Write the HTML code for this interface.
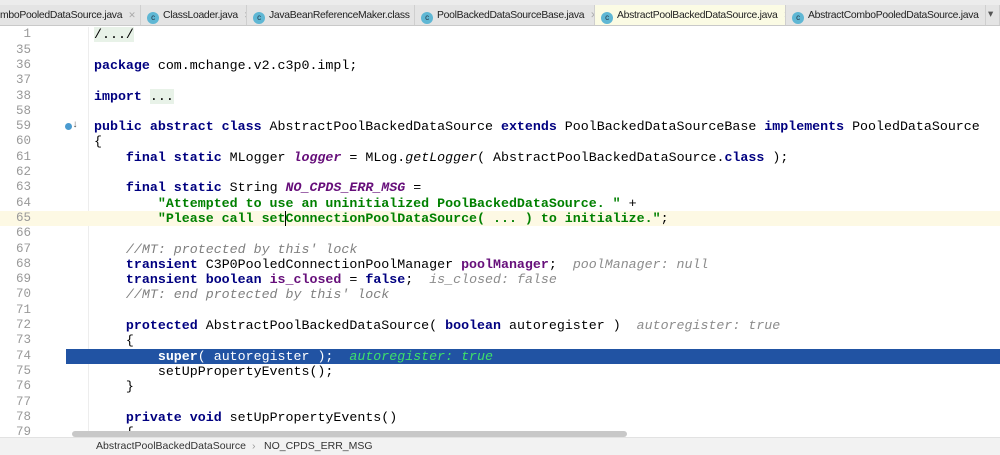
<!DOCTYPE html>
<html><head><meta charset="utf-8"><style>
*{margin:0;padding:0;box-sizing:border-box}
body{width:1000px;height:455px;overflow:hidden;background:#fff;position:relative;font-family:"Liberation Sans",sans-serif}
#tabs{position:absolute;left:0;top:0;width:1000px;height:26px;background:#e4e4e4;border-bottom:1px solid #c9c9c9}
#tabs .top{position:absolute;left:0;top:0;width:1000px;height:5px;background:#ececec}
.tab{position:absolute;top:5px;height:20px;font-size:10.4px;letter-spacing:-0.3px;color:#222;line-height:20px;padding-left:6px;white-space:nowrap;border-right:1px solid #cfcfcf;overflow:hidden}
.tab .x{color:#aaa;margin-left:6px;font-size:9px}
.ic{display:inline-block;width:12px;height:12px;border-radius:6px;background:#5fb7d4;color:#234;font-size:8px;line-height:12px;text-align:center;vertical-align:-2px;margin-right:4px}
.active{background:#fbfbe4}
#code{position:absolute;left:0;top:27.4px;width:1000px}
.l{height:15.3px;line-height:15.3px;position:relative;font-family:"Liberation Mono",monospace;font-size:13.3px;white-space:pre;color:#000}
.n{position:absolute;left:0;width:31px;text-align:right;color:#999;font-size:12.5px}
.c{position:absolute;left:94px}
.k{color:#000080;font-weight:bold}
.s{color:#008000;font-weight:bold}
.p{color:#660e7a;font-weight:bold}
.pi{color:#660e7a;font-style:italic;font-weight:bold}
.it{font-style:italic}
.cm{color:#808080;font-style:italic}
.h{color:#8c8c8c;font-style:italic}
.fold{background:#e8f2e8;color:#000}
.sel{background:#2153a3;}
.cur{background:#fdf9e4}
.gl{position:absolute;left:88px;top:27px;width:1px;height:410px;background:#ededed}
#sb{position:absolute;left:0;top:437px;width:1000px;height:18px;background:#f2f2f2;border-top:1px solid #e2e2e2;font-size:10.5px;color:#333;line-height:17px}
#thumb{position:absolute;left:72px;top:431px;width:555px;height:6px;border-radius:3px;background:#c8c8c8}
</style></head><body>
<div id="tabs"><div class="top"></div>
<div class="tab" style="left:0;width:141px;padding-left:0">mboPooledDataSource.java<span class="x">✕</span></div>
<div class="tab" style="left:141px;width:106px"><span class="ic">c</span>ClassLoader.java<span class="x">✕</span></div>
<div class="tab" style="left:247px;width:168px"><span class="ic">c</span>JavaBeanReferenceMaker.class<span class="x">✕</span></div>
<div class="tab" style="left:415px;width:180px"><span class="ic">c</span>PoolBackedDataSourceBase.java<span class="x">✕</span></div>
<div class="tab active" style="left:595px;width:191px"><span class="ic">c</span>AbstractPoolBackedDataSource.java<span class="x">✕</span></div>
<div class="tab" style="left:786px;width:200px"><span class="ic">c</span>AbstractComboPooledDataSource.java<span class="x">✕</span></div>
<div class="tab" style="left:986px;width:14px;padding-left:2px;color:#555">▾</div>
</div>
<div class="gl"></div>
<div id="code">
<div class="l"><span class="n">1</span><span class="c"><span class="fold">/.../</span></span></div>
<div class="l"><span class="n">35</span></div>
<div class="l"><span class="n">36</span><span class="c"><span class="k">package</span> com.mchange.v2.c3p0.impl;</span></div>
<div class="l"><span class="n">37</span></div>
<div class="l"><span class="n">38</span><span class="c"><span class="k">import</span> <span class="fold">...</span></span></div>
<div class="l"><span class="n">58</span></div>
<div class="l"><span class="n">59</span><span style="position:absolute;left:65px;top:4px;width:7px;height:7px;border-radius:4px;background:#4a9bd0"></span><span style="position:absolute;left:72px;top:-1px;font-size:10px;color:#555">↓</span><span class="c"><span class="k">public abstract class</span> AbstractPoolBackedDataSource <span class="k">extends</span> PoolBackedDataSourceBase <span class="k">implements</span> PooledDataSource</span></div>
<div class="l"><span class="n">60</span><span class="c">{</span></div>
<div class="l"><span class="n">61</span><span class="c">    <span class="k">final static</span> MLogger <span class="pi">logger</span> = MLog.<span class="it">getLogger</span>( AbstractPoolBackedDataSource.<span class="k">class</span> );</span></div>
<div class="l"><span class="n">62</span></div>
<div class="l"><span class="n">63</span><span class="c">    <span class="k">final static</span> String <span class="pi">NO_CPDS_ERR_MSG</span> =</span></div>
<div class="l"><span class="n">64</span><span class="c">        <span class="s">"Attempted to use an uninitialized PoolBackedDataSource. "</span> +</span></div>
<div class="l cur"><span class="n">65</span><span class="c">        <span class="s">"Please call set<span style="border-left:1px solid #000;margin-left:-1px">C</span>onnectionPoolDataSource( ... ) to initialize."</span>;</span></div>
<div class="l"><span class="n">66</span></div>
<div class="l"><span class="n">67</span><span class="c">    <span class="cm">//MT: protected by this' lock</span></span></div>
<div class="l"><span class="n">68</span><span class="c">    <span class="k">transient</span> C3P0PooledConnectionPoolManager <span class="p">poolManager</span>;  <span class="h">poolManager: null</span></span></div>
<div class="l"><span class="n">69</span><span class="c">    <span class="k">transient boolean</span> <span class="p">is_closed</span> = <span class="k">false</span>;  <span class="h">is_closed: false</span></span></div>
<div class="l"><span class="n">70</span><span class="c">    <span class="cm">//MT: end protected by this' lock</span></span></div>
<div class="l"><span class="n">71</span></div>
<div class="l"><span class="n">72</span><span class="c">    <span class="k">protected</span> AbstractPoolBackedDataSource( <span class="k">boolean</span> autoregister )  <span class="h">autoregister: true</span></span></div>
<div class="l"><span class="n">73</span><span class="c">    {</span></div>
<div class="l"><span class="n">74</span><div class="sel" style="position:absolute;left:66px;top:0;width:934px;height:15.3px"></div><span class="c" style="color:#fff">        <b>super</b>( autoregister );  <span style="color:#3ee06a;font-style:italic">autoregister: true</span></span></div>
<div class="l"><span class="n">75</span><span class="c">        setUpPropertyEvents();</span></div>
<div class="l"><span class="n">76</span><span class="c">    }</span></div>
<div class="l"><span class="n">77</span></div>
<div class="l"><span class="n">78</span><span class="c">    <span class="k">private void</span> setUpPropertyEvents()</span></div>
<div class="l"><span class="n">79</span><span class="c">    {</span></div>
</div>
<div id="thumb"></div>
<div id="sb"><span style="position:absolute;left:96px">AbstractPoolBackedDataSource</span><span style="position:absolute;left:252px;color:#999">›</span><span style="position:absolute;left:264px">NO_CPDS_ERR_MSG</span></div>
</body></html>
